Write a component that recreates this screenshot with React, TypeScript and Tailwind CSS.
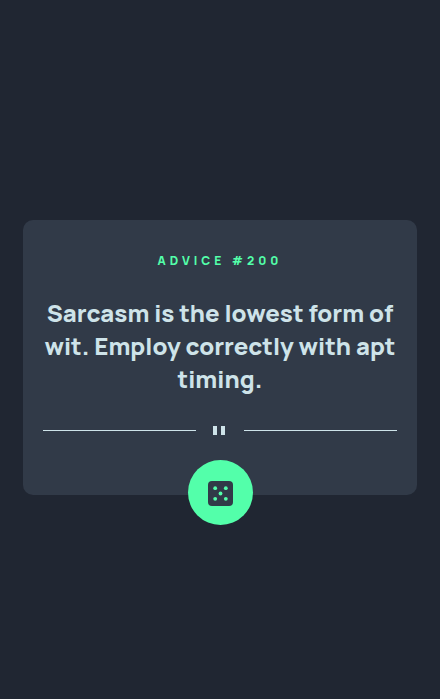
function Divider() {
  return (
    <div className="mt-[25px] flex h-[21px] items-center" aria-hidden="true">
      <span className="h-px flex-1 bg-[#cee3e9]" />
      <svg className="h-[21px] w-12" viewBox="0 0 48 21" fill="#cee3e9" shapeRendering="crispEdges">
        <rect x="17" y="6" width="4" height="9" />
        <rect x="25" y="6" width="4" height="9" />
      </svg>
      <span className="h-px flex-1 bg-[#cee3e9]" />
    </div>
  );
}

function DiceIcon() {
  return (
    <svg className="size-[25px]" viewBox="0 0 25 25" aria-hidden="true">
      <rect width="25" height="25" rx="4" fill="#313a48" />
      <g fill="#53ffaa">
        <circle cx="7.2" cy="7.2" r="1.9" />
        <circle cx="17.8" cy="7.2" r="1.9" />
        <circle cx="12.5" cy="12.5" r="1.9" />
        <circle cx="7.2" cy="17.8" r="1.9" />
        <circle cx="17.8" cy="17.8" r="1.9" />
      </g>
    </svg>
  );
}

export default function App() {
  return (
    <main className="flex min-h-screen items-center justify-center bg-[#202632] px-[23px] pt-4 font-['Manrope','Inter',sans-serif]">
      <section className="flex w-full max-w-lg flex-col rounded-[10px] bg-[#313a48] px-5 pt-[31px] text-center">
        <h1 className="text-[12px] leading-5 font-extrabold tracking-[4px] text-[#53ffaa]">ADVICE #200</h1>
        <p className="mt-[25px] text-[24px] leading-[33px] font-extrabold text-[#cee3e9]">
          Sarcasm is the lowest form of wit. Employ correctly with apt timing.
        </p>
        <Divider />
        <button
          type="button"
          aria-label="New advice"
          className="mt-[19px] -mb-[30px] flex size-[65px] cursor-pointer items-center justify-center self-center rounded-full bg-[#53ffaa] pt-px"
        >
          <DiceIcon />
        </button>
      </section>
    </main>
  );
}
